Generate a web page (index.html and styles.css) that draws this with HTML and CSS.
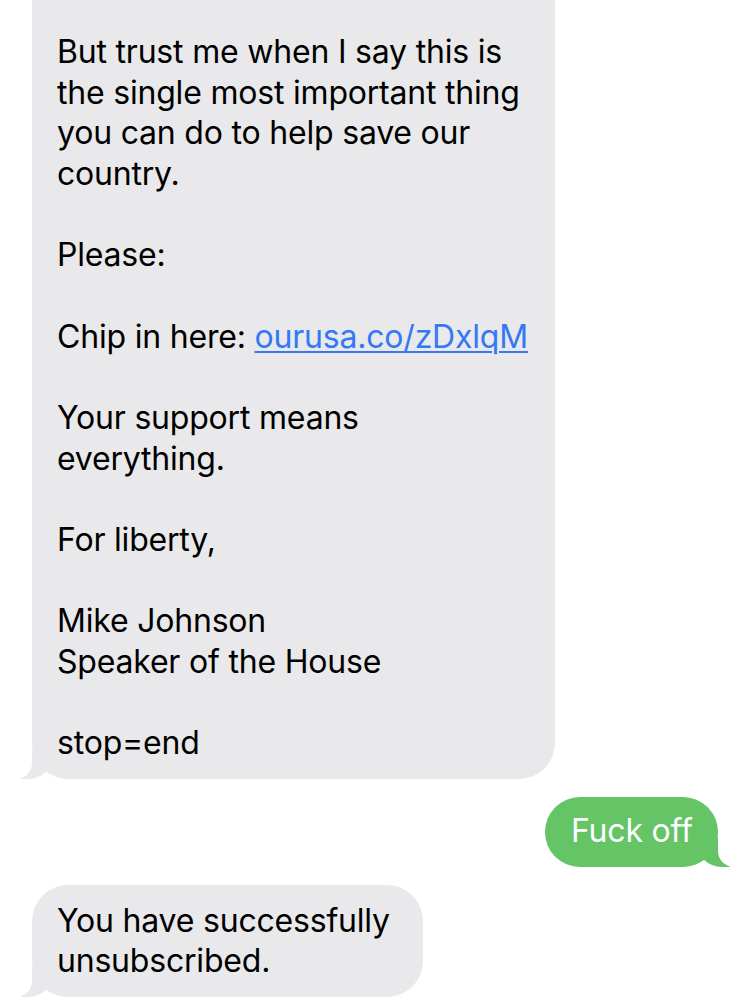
FILE: index.html
```html
<!DOCTYPE html>
<html lang="en">
<head>
    <meta charset="UTF-8">
    <meta name="viewport" content="width=device-width, initial-scale=1.0">
    <title>Messages</title>
    <link rel="stylesheet" href="styles.css">
</head>
<body>

<!-- Conversation -->
<div class="thread">
    <div class="bubble them first">
        <p>But trust me when I say this is<br>the single most important thing<br>you can do to help save our<br>country.</p>
        <p>Please:</p>
        <p>Chip in here: <a href="#">ourusa.co/zDxlqM</a></p>
        <p>Your support means<br>everything.</p>
        <p>For liberty,</p>
        <p>Mike Johnson<br>Speaker of the House</p>
        <p>stop=end</p>
    </div>

    <div class="bubble me reply">
        <p>Fuck off</p>
    </div>

    <div class="bubble them last">
        <p>You have successfully<br>unsubscribed.</p>
    </div>
</div>

</body>
</html>
```

FILE: styles.css
```css
* {
    box-sizing: border-box;
}

body {
    margin: 0;
    background-color: white;
    font-family: Inter, "Liberation Sans", Arial, sans-serif;
    overflow: hidden;
}

/* Message list */
.thread {
    display: flex;
    flex-direction: column;
    gap: 18px;
    padding: 0 32px;
}

.bubble {
    position: relative;
    padding: 16px 25px 15px 25px;
    border-radius: 36px;
    font-size: 32px;
    line-height: 40.65px;
    letter-spacing: -0.2px;
    white-space: nowrap;
}

.bubble p {
    position: relative;
    z-index: 2;
    margin: 0 0 40.65px 0;
}

.bubble p:last-child {
    margin-bottom: 0;
}

/* Incoming (grey) */
.them {
    align-self: flex-start;
    background-color: #e9e9eb;
    color: black;
}

.them::before {
    content: "";
    position: absolute;
    z-index: 0;
    bottom: 0;
    left: -12px;
    width: 34px;
    height: 30px;
    background-color: #e9e9eb;
    border-bottom-right-radius: 26px;
}

.them::after {
    content: "";
    position: absolute;
    z-index: 1;
    bottom: 0;
    left: -22px;
    width: 22px;
    height: 30px;
    background-color: white;
    border-bottom-right-radius: 16px;
}

.them a {
    color: #3478f6;
    text-decoration: underline;
    text-underline-offset: 3px;
    text-decoration-thickness: 2px;
}

/* cut off at the top of the screen */
.first {
    width: 523px;
    margin-top: -40px;
    padding-top: 72px;
    border-top-left-radius: 0;
    border-top-right-radius: 0;
}

.last {
    width: 391px;
}

/* Outgoing (green) */
.me {
    align-self: flex-end;
    background-color: #65c466;
    color: white;
}

.reply {
    width: 173px;
    height: 70px;
    padding: 14px 26px;
    border-radius: 35px;
}

.me::before {
    content: "";
    position: absolute;
    z-index: 0;
    bottom: 0;
    right: -12px;
    width: 34px;
    height: 30px;
    background-color: #65c466;
    border-bottom-left-radius: 26px;
}

.me::after {
    content: "";
    position: absolute;
    z-index: 1;
    bottom: 0;
    right: -22px;
    width: 22px;
    height: 30px;
    background-color: white;
    border-bottom-left-radius: 16px;
}
```
